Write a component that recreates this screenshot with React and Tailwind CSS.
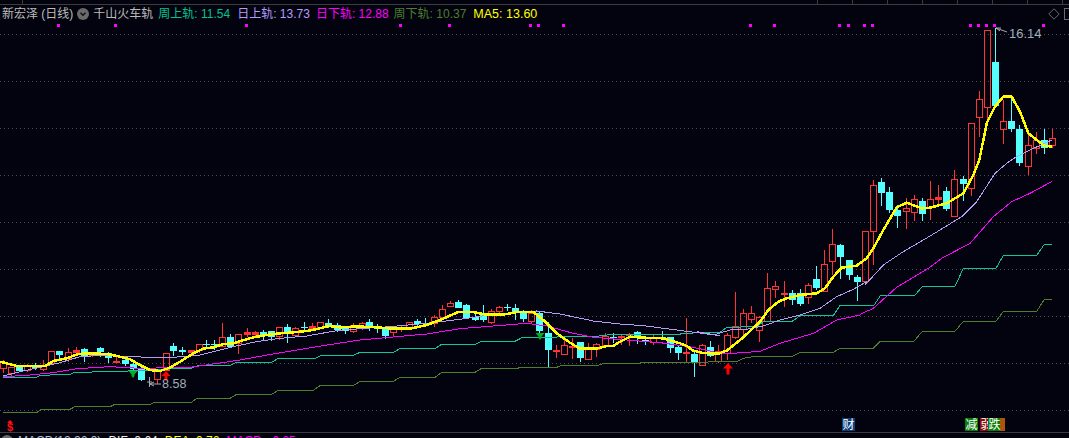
const FONT = '"Liberation Sans", "Noto Sans CJK SC", sans-serif'

// all chart data was read from crops at 3x, so it stays in crop coordinates
const crop = (ox, oy, pts) => pts.map(([x, ...ys]) => [ox + x / 3, ...ys.map((y) => oy + y / 3)])

// x, wick top, body top, body bottom, wick bottom
const redBars = [
    ...crop(0, 290, [
        [10, 210, 215, 235, 248], [34, 232, 232, 250, 258], [82, 222, 226, 240, 245], [130, 210, 226, 238, 242],
        [154, 184, 184, 218, 218], [205, 175, 187, 205, 215], [229, 172, 180, 187, 190], [277, 185, 190, 195, 200],
        [349, 200, 213, 216, 220], [472, 240, 240, 268, 283], [497, 190, 190, 240, 240], [572, 181, 181, 185, 192],
        [596, 162, 162, 180, 190], [667, 98, 142, 168, 170], [715, 133, 133, 160, 192], [741, 115, 127, 133, 140],
        [766, 122, 126, 133, 140], [838, 112, 112, 138, 150], [886, 112, 115, 136, 140], [937, 98, 107, 113, 120],
        [961, 97, 97, 112, 112], [1058, 100, 106, 122, 130],
    ]),
    ...crop(360, 290, [
        [5, 95, 100, 110, 120], [100, 108, 114, 127, 140], [124, 105, 110, 112, 125], [148, 97, 97, 110, 110],
        [223, 75, 80, 98, 112], [247, 45, 57, 80, 85], [271, 33, 40, 47, 52], [394, 58, 62, 95, 102],
        [418, 48, 50, 62, 72], [514, 60, 70, 92, 98], [588, 165, 180, 182, 205], [613, 145, 165, 192, 195],
        [637, 145, 168, 170, 207], [685, 160, 178, 206, 208], [709, 160, 163, 178, 200], [736, 130, 137, 165, 168],
        [784, 134, 137, 140, 165], [808, 130, 133, 136, 168], [880, 135, 140, 156, 165],
    ]),
    ...crop(680, 220, [
        [19, 295, 397, 400, 428], [67, 372, 376, 434, 436], [115, 375, 394, 422, 430], [142, 340, 346, 400, 420],
        [166, 216, 319, 350, 358], [190, 268, 280, 326, 355], [214, 258, 280, 296, 310], [238, 288, 292, 330, 365],
        [262, 160, 205, 304, 305], [286, 183, 198, 208, 235], [312, 183, 220, 222, 260], [385, 188, 196, 232, 252],
        [433, 90, 133, 212, 215], [457, 27, 72, 122, 165], [556, 34, 34, 182, 185],
    ]),
    ...crop(860, 0, [
        [40, 540, 556, 693, 795], [139, 595, 625, 632, 688], [163, 586, 598, 635, 662], [211, 544, 598, 622, 660],
        [235, 556, 592, 598, 620], [283, 510, 538, 647, 648], [334, 370, 370, 563, 588], [358, 272, 298, 350, 410],
        [382, 91, 91, 322, 365], [430, 300, 364, 386, 432], [505, 405, 436, 497, 525], [529, 395, 420, 445, 462],
        [577, 386, 415, 435, 445],
    ]),
]

const cyanBars = [
    ...crop(0, 290, [
        [58, 228, 228, 243, 245], [106, 218, 225, 233, 240], [178, 184, 184, 195, 210], [253, 175, 178, 200, 215],
        [301, 170, 174, 186, 200], [325, 185, 190, 203, 218], [375, 198, 210, 222, 228], [400, 215, 222, 238, 245],
        [424, 230, 233, 270, 272], [520, 160, 168, 184, 198], [546, 172, 180, 185, 195], [618, 150, 162, 165, 178],
        [642, 150, 162, 165, 180], [691, 132, 142, 170, 175], [790, 120, 126, 136, 150], [814, 122, 124, 140, 152],
        [862, 102, 112, 130, 160], [912, 97, 112, 114, 122], [985, 88, 98, 108, 115], [1010, 100, 106, 120, 125],
        [1034, 108, 112, 122, 132],
    ]),
    ...crop(360, 290, [
        [28, 88, 97, 115, 122], [52, 102, 108, 118, 128], [76, 108, 115, 137, 147], [172, 88, 94, 102, 112],
        [196, 85, 100, 102, 112], [295, 30, 37, 53, 55], [319, 42, 45, 85, 88], [344, 70, 82, 90, 93],
        [370, 45, 76, 90, 95], [442, 42, 52, 54, 64], [466, 42, 55, 70, 90], [490, 60, 65, 88, 95],
        [538, 62, 70, 123, 135], [565, 97, 130, 180, 232], [661, 155, 157, 204, 215], [760, 130, 142, 144, 158],
        [832, 124, 126, 145, 162], [856, 145, 150, 157, 165], [907, 124, 142, 143, 150], [931, 140, 142, 174, 188],
        [955, 168, 172, 188, 210],
    ]),
    ...crop(680, 220, [
        [43, 395, 402, 426, 470], [91, 363, 381, 408, 412], [337, 210, 220, 240, 254], [361, 208, 220, 252, 258],
        [409, 138, 177, 204, 210], [481, 72, 75, 110, 177], [508, 120, 120, 164, 180], [532, 165, 171, 185, 242],
    ]),
    ...crop(860, 0, [
        [64, 534, 546, 578, 618], [88, 562, 576, 630, 638], [112, 615, 630, 648, 684], [187, 595, 603, 642, 662],
        [259, 562, 573, 627, 632], [310, 528, 537, 552, 602], [406, 85, 186, 318, 318], [454, 295, 363, 387, 395],
        [478, 375, 387, 489, 497], [553, 388, 420, 443, 462],
    ]),
]

const ma5 = [
    ...crop(0, 290, [
        [0, 215], [20, 220], [50, 228], [135, 228], [160, 213], [200, 205], [235, 192], [270, 190], [320, 192], [350, 198],
        [390, 208], [420, 225], [450, 240], [480, 243], [510, 233], [545, 212], [580, 190], [610, 176], [640, 172], [670, 162],
        [700, 160], [725, 152], [760, 142], [800, 135], [840, 130], [880, 127], [920, 123], [960, 115], [985, 108], [1020, 112], [1060, 110],
    ]),
    ...crop(360, 290, [
        [0, 110], [40, 111], [100, 116], [150, 116], [200, 105], [240, 90], [295, 66], [340, 66], [380, 74], [430, 74],
        [470, 66], [520, 66], [550, 90], [590, 130], [630, 158], [660, 176], [710, 176], [740, 168], [760, 168], [780, 155],
        [810, 140], [850, 143], [910, 145], [960, 160],
    ]),
    ...crop(680, 220, [
        [20, 378], [40, 392], [70, 399], [115, 401], [140, 392], [165, 372], [190, 352], [215, 328], [240, 305], [265, 270],
        [295, 245], [320, 235], [360, 225], [410, 220], [435, 205], [460, 170], [485, 143], [530, 137], [560, 115], [580, 85],
    ]),
    ...crop(860, 0, [
        [70, 690], [110, 622], [140, 608], [185, 625], [210, 623], [260, 610], [310, 580], [340, 525], [358, 480], [380, 370],
        [405, 320], [430, 290], [455, 290], [480, 335], [505, 400], [530, 420], [553, 437], [577, 440],
    ]),
]

const dayUpper = [
    ...crop(0, 290, [[10, 258], [60, 245], [130, 230], [180, 218], [240, 200], [290, 197], [350, 198], [400, 200], [470, 203], [520, 202], [600, 195], [700, 170], [770, 155], [840, 145], [920, 138], [1010, 122], [1080, 116]]),
    ...crop(360, 290, [[90, 110], [200, 100], [300, 88], [400, 73], [530, 63], [600, 72], [700, 93], [780, 102], [850, 107], [950, 120], [1080, 137]]),
    ...crop(680, 220, [[50, 335], [100, 345], [150, 330], [200, 328], [250, 318], [300, 300], [360, 285], [420, 265], [470, 230], [520, 208], [560, 185]]),
    ...crop(860, 170, [[15, 345], [70, 285], [130, 245], [190, 210], [240, 180], [305, 140], [350, 95], [405, 10]]),
    ...crop(860, 0, [[440, 490], [470, 470], [510, 450], [575, 420]]),
]

const dayLower = [
    ...crop(0, 290, [[10, 260], [80, 256], [160, 248], [230, 236], [330, 230], [420, 235], [570, 232], [640, 222], [720, 210], [830, 190], [950, 170], [1080, 150]]),
    ...crop(360, 290, [[110, 140], [200, 132], [300, 116], [400, 108], [500, 100], [560, 108], [640, 130], [700, 142], [800, 150], [900, 158], [1000, 172]]),
    ...crop(680, 220, [[130, 402], [240, 394], [300, 370], [400, 340], [470, 300], [540, 285]]),
    ...crop(860, 170, [[0, 433], [40, 415], [110, 352], [205, 295], [245, 265], [330, 220], [400, 140], [455, 95], [510, 70], [575, 35]]),
]

const weekUpper = [
    ...crop(0, 290, [[10, 262], [110, 262], [120, 256], [210, 253], [225, 247], [330, 245], [470, 240], [520, 236], [570, 236], [590, 228], [690, 226], [710, 217], [815, 217], [835, 205], [945, 205], [965, 196], [1060, 196]]),
    ...crop(360, 290, [[0, 187], [100, 187], [120, 176], [225, 176], [245, 163], [345, 163], [365, 154], [465, 154], [488, 142], [700, 140], [750, 134], [960, 133]]),
    ...crop(680, 220, [[0, 340], [120, 337], [140, 322], [230, 320], [250, 305], [335, 305], [360, 287], [460, 287], [480, 256]]),
    ...crop(860, 170, [[0, 406], [42, 406], [62, 376], [165, 376], [187, 349], [285, 349], [310, 295], [408, 295], [430, 256], [530, 256], [553, 223], [575, 223]]),
]

const weekLower = [
    ...crop(0, 290, [[10, 368], [110, 368], [125, 358], [210, 358], [225, 350], [330, 350], [345, 343], [450, 343], [465, 337], [575, 337], [590, 325], [690, 325], [710, 313], [815, 313], [835, 301], [940, 301], [960, 287], [1060, 287]]),
    ...crop(360, 290, [[0, 274], [100, 274], [120, 262], [225, 262], [245, 247], [345, 247], [365, 235], [475, 235], [478, 232], [590, 232], [605, 226], [715, 226], [730, 220], [840, 220], [845, 217], [960, 217]]),
    ...crop(680, 220, [[0, 427], [170, 425], [190, 415], [230, 408], [340, 408], [360, 397], [460, 397], [480, 385], [580, 385], [600, 365]]),
    ...crop(860, 170, [[160, 516], [187, 484], [285, 484], [310, 454], [408, 454], [430, 424], [530, 424], [553, 388], [575, 388]]),
]

const signalDots = [58, 115, 246, 400, 449, 530, 538, 563, 750, 774, 839, 848, 864, 872, 970, 978, 986, 994, 1043]
const gridRows = [34, 81, 128, 175, 222, 269, 316, 363, 410]

const legend = [
    { label: '周上轨:', value: '11.54', color: 'text-[#00c490]', left: 'ml-[5px]' },
    { label: '日上轨:', value: '13.73', color: 'text-[#b49cff]', left: 'ml-[7px]' },
    { label: '日下轨:', value: '12.88', color: 'text-[#ff00ff]', left: 'ml-[6px]' },
    { label: '周下轨:', value: '10.37', color: 'text-[#4d7f2c]', left: 'ml-[5px]' },
    { label: 'MA5:', value: '13.60', color: 'text-[#ffff00] text-[12.500px]', left: 'ml-[7px]' },
]

const toPoints = (line) => line.map(([x, y]) => `${x},${y}`).join(' ')

function Candle({ bar, color }) {
    const [x, wickTop, top, bottom, wickBottom] = bar
    const cx = Math.round(x)
    const isRed = color === 'red'
    const stroke = isRed ? '#ff3434' : '#54ffff'
    const y = Math.round(top)
    const h = Math.max(Math.round(bottom) - y, 1)

    return (
        <g shapeRendering="crispEdges">
            <line x1={cx + 0.5} x2={cx + 0.5} y1={wickTop} y2={top} stroke={stroke} />
            <line x1={cx + 0.5} x2={cx + 0.5} y1={bottom} y2={wickBottom} stroke={stroke} />
            {isRed
                ? <rect x={cx - 2.5} y={y + 0.5} width={6} height={h} fill={h < 3 ? stroke : 'none'} stroke={stroke} />
                : <rect x={cx - 3} y={y} width={7} height={h} fill={stroke} />}
        </g>
    )
}

function Badge({ x, width, bg, text }) {
    return (
        <g>
            <rect x={x} y={418} width={width} height={13} fill={bg} shapeRendering="crispEdges" />
            <text x={x + 0.5} y={429} fontSize={12} fill="#ffffff" fontFamily={FONT}>{text}</text>
        </g>
    )
}

function Chart() {
    return (
        <svg viewBox="0 23 1069 409" className="block h-[409px] w-[1069px] shrink-0">
            {gridRows.map((y) => (
                <line key={y} x1={0} x2={1069} y1={y + 0.5} y2={y + 0.5} stroke="#4a4a4a" strokeDasharray="1 3" shapeRendering="crispEdges" />
            ))}
            {signalDots.map((x) => (
                <rect key={x} x={x - 1} y={24} width={3} height={3} fill="#ff00ff" shapeRendering="crispEdges" />
            ))}

            {redBars.map((bar, i) => <Candle key={i} bar={bar} color="red" />)}
            {cyanBars.map((bar, i) => <Candle key={i} bar={bar} color="cyan" />)}

            <polyline points={toPoints(weekLower)} fill="none" stroke="#4d7f2c" shapeRendering="crispEdges" />
            <polyline points={toPoints(weekUpper)} fill="none" stroke="#10c49c" shapeRendering="crispEdges" />
            <polyline points={toPoints(dayLower)} fill="none" stroke="#ff00ff" shapeRendering="crispEdges" />
            <polyline points={toPoints(dayUpper)} fill="none" stroke="#b79cf5" shapeRendering="crispEdges" />
            <polyline points={toPoints(ma5)} fill="none" stroke="#ffff00" strokeWidth={2.5} shapeRendering="crispEdges" />

            {/* buy and sell arrows */}
            <path d="M128.500 371h9l-3 3.500v1.500l-1.500 2-1.500-2v-1.500z" fill="#00b020" />
            <path d="M535.500 333h9l-3 3.500v1.500l-1.500 2-1.500-2v-1.500z" fill="#00b020" />
            <path d="M166 371l4.500 5h-3v4.500h-3v-4.500h-3z" fill="#ff0000" />
            <path d="M728 363l5 5.500h-3.500v6h-3v-6h-3.500z" fill="#ff0000" />

            {/* high and low price marks */}
            <path d="M149.500 377v10M147 382h5M150 384h11M150 384l4-2M150 384l4 2" stroke="#a8a8a8" fill="none" />
            <text x={162} y={388} fontSize={12.5} fill="#a0aebc" fontFamily={FONT}>8.58</text>
            <path d="M996 28l11 4M996 28l5 0M996 28l4 3" stroke="#a8a8a8" fill="none" />
            <text x={1009} y={38} fontSize={13} fill="#a0aebc" fontFamily={FONT}>16.14</text>

            {/* event flags along the bottom */}
            <path d="M10 420l3 3h-6z" fill="#ff1010" />
            <text x={7} y={431} fontSize={11} fontWeight="bold" fill="#ff1010" fontFamily={FONT}>$</text>
            <Badge x={842} width={13} bg="#0a3f7c" text="财" />
            <Badge x={965} width={13} bg="#0a7d0a" text="减" />
            <rect x={998} y={418} width={7} height={13} fill="#a8560a" shapeRendering="crispEdges" />
            <Badge x={980} width={13} bg="#8c0a0a" text="弱" />
            <Badge x={988} width={12} bg="#0a7d0a" text="跌" />
        </svg>
    )
}

export default function App() {
    return (
        <div className="flex h-[438px] w-[1069px] flex-col overflow-hidden bg-[#03030f]" style={{ fontFamily: FONT }}>
            <div className="flex h-[5px] shrink-0 border-b border-[#3c3c3c] pl-[22px] pr-[6px]">
                <span className="w-px bg-[#3c3c3c]" />
                <div className="ml-auto flex gap-[34px]">
                    {[817, 852, 887, 922, 957, 992, 1027, 1062].map((x) => (
                        <span key={x} className="h-full w-px bg-[#3c3c3c]" />
                    ))}
                </div>
            </div>

            <div className="flex h-[18px] shrink-0 items-center whitespace-nowrap pl-[2px] text-[12px] leading-[18px]">
                <span className="text-[#bcbcbc]">新宏泽 (日线)</span>
                <span className="ml-[4px] flex h-3 w-3 items-center justify-center rounded-full bg-[#6a6a6a]">
                    <svg viewBox="0 0 12 12" className="h-3 w-3">
                        <path d="M3.500 4.800l2.500 2.500 2.500-2.500" fill="none" stroke="#111" strokeWidth={1.4} />
                    </svg>
                </span>
                <span className="ml-[4px] text-[#bcbcbc]">千山火车轨</span>
                {legend.map((item) => (
                    <span key={item.label} className={`${item.left} ${item.color}`}>
                        {item.label} {item.value}
                    </span>
                ))}
                <svg viewBox="0 0 12 12" className="ml-auto mr-[1px] h-3 w-3">
                    <path d="M6 .8L11.200 6 6 11.200.8 6z" fill="none" stroke="#6a6a6a" />
                </svg>
                <span className="ml-[3px] h-3 w-[5px] border border-r-0 border-[#6a6a6a]" />
            </div>

            <Chart />

            <div className="flex h-[6px] shrink-0 items-start gap-[7px] overflow-hidden border-t border-[#3c3c3c] pl-[1px] pt-[2px] text-[12px] leading-[13px] whitespace-nowrap">
                <span className="h-3 w-3 shrink-0 rounded-full bg-[#6a6a6a]" />
                <span className="-ml-[2px] text-[#a8c0d8]">MACD(12,26,9)</span>
                <span className="text-[#e8e8e8]">DIF: 0.64</span>
                <span className="text-[#ffff00]">DEA: 0.76</span>
                <span className="text-[#ff00ff]">MACD: -0.25</span>
            </div>
        </div>
    )
}
